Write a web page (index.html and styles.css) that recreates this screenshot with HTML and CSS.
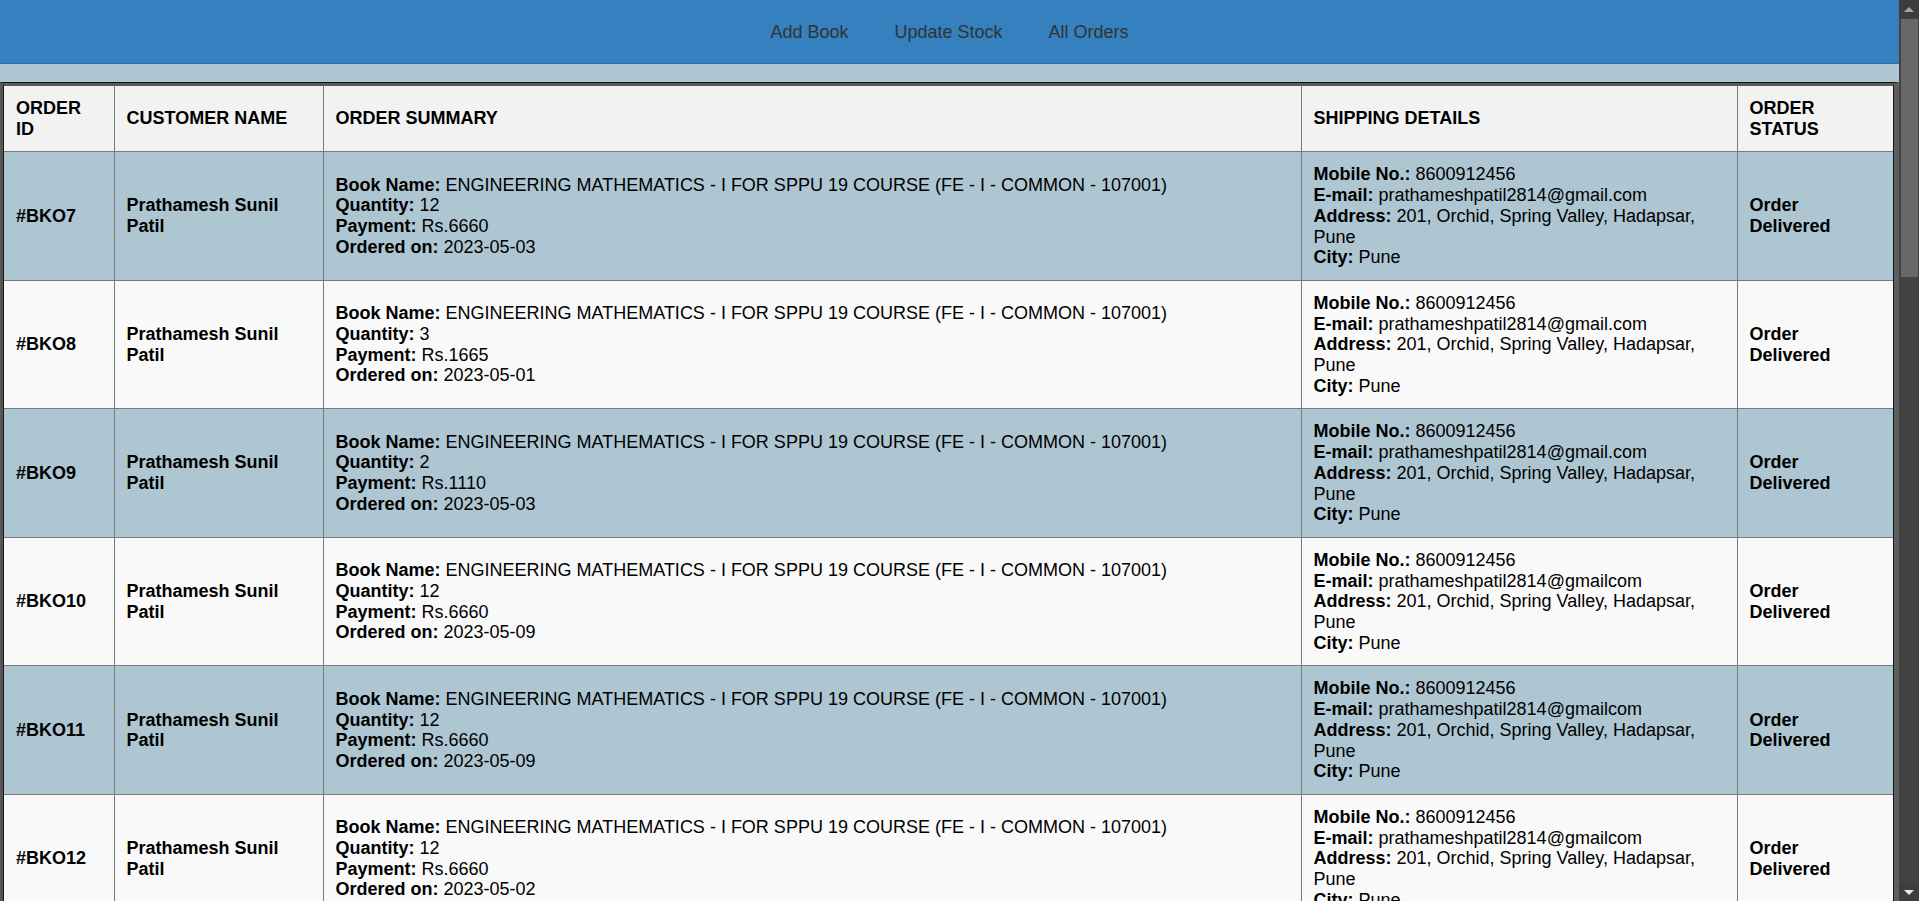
FILE: index.html
```html
<!DOCTYPE html>
<html lang="en">
<head>
<meta charset="utf-8">
<title>All Orders</title>
<link rel="stylesheet" href="styles.css">
</head>
<body>
<div class="page">
<nav class="topnav">
  <a class="nav-link" href="#">Add Book</a>
  <a class="nav-link" href="#">Update Stock</a>
  <a class="nav-link" href="#">All Orders</a>
</nav>
<main class="orders">
  <div class="orders-inner">
    <table class="orders-table">
      <colgroup>
        <col class="c-id">
        <col class="c-name">
        <col class="c-summary">
        <col class="c-ship">
        <col class="c-status">
      </colgroup>
      <thead>
        <tr><th>ORDER ID</th><th>CUSTOMER NAME</th><th>ORDER SUMMARY</th><th>SHIPPING DETAILS</th><th>ORDER STATUS</th></tr>
      </thead>
      <tbody>
        <tr><td class="bold">#BKO7</td><td class="bold">Prathamesh Sunil Patil</td><td><b>Book Name:</b> ENGINEERING MATHEMATICS - I FOR SPPU 19 COURSE (FE - I - COMMON - 107001)<br><b>Quantity:</b> 12<br><b>Payment:</b> Rs.6660<br><b>Ordered on:</b> 2023-05-03</td><td><b>Mobile No.:</b> 8600912456<br><b>E-mail:</b> prathameshpatil2814@gmail.com<br><b>Address:</b> 201, Orchid, Spring Valley, Hadapsar, Pune<br><b>City:</b> Pune</td><td class="bold">Order Delivered</td></tr>
        <tr><td class="bold">#BKO8</td><td class="bold">Prathamesh Sunil Patil</td><td><b>Book Name:</b> ENGINEERING MATHEMATICS - I FOR SPPU 19 COURSE (FE - I - COMMON - 107001)<br><b>Quantity:</b> 3<br><b>Payment:</b> Rs.1665<br><b>Ordered on:</b> 2023-05-01</td><td><b>Mobile No.:</b> 8600912456<br><b>E-mail:</b> prathameshpatil2814@gmail.com<br><b>Address:</b> 201, Orchid, Spring Valley, Hadapsar, Pune<br><b>City:</b> Pune</td><td class="bold">Order Delivered</td></tr>
        <tr><td class="bold">#BKO9</td><td class="bold">Prathamesh Sunil Patil</td><td><b>Book Name:</b> ENGINEERING MATHEMATICS - I FOR SPPU 19 COURSE (FE - I - COMMON - 107001)<br><b>Quantity:</b> 2<br><b>Payment:</b> Rs.1110<br><b>Ordered on:</b> 2023-05-03</td><td><b>Mobile No.:</b> 8600912456<br><b>E-mail:</b> prathameshpatil2814@gmail.com<br><b>Address:</b> 201, Orchid, Spring Valley, Hadapsar, Pune<br><b>City:</b> Pune</td><td class="bold">Order Delivered</td></tr>
        <tr><td class="bold">#BKO10</td><td class="bold">Prathamesh Sunil Patil</td><td><b>Book Name:</b> ENGINEERING MATHEMATICS - I FOR SPPU 19 COURSE (FE - I - COMMON - 107001)<br><b>Quantity:</b> 12<br><b>Payment:</b> Rs.6660<br><b>Ordered on:</b> 2023-05-09</td><td><b>Mobile No.:</b> 8600912456<br><b>E-mail:</b> prathameshpatil2814@gmailcom<br><b>Address:</b> 201, Orchid, Spring Valley, Hadapsar, Pune<br><b>City:</b> Pune</td><td class="bold">Order Delivered</td></tr>
        <tr><td class="bold">#BKO11</td><td class="bold">Prathamesh Sunil Patil</td><td><b>Book Name:</b> ENGINEERING MATHEMATICS - I FOR SPPU 19 COURSE (FE - I - COMMON - 107001)<br><b>Quantity:</b> 12<br><b>Payment:</b> Rs.6660<br><b>Ordered on:</b> 2023-05-09</td><td><b>Mobile No.:</b> 8600912456<br><b>E-mail:</b> prathameshpatil2814@gmailcom<br><b>Address:</b> 201, Orchid, Spring Valley, Hadapsar, Pune<br><b>City:</b> Pune</td><td class="bold">Order Delivered</td></tr>
        <tr><td class="bold">#BKO12</td><td class="bold">Prathamesh Sunil Patil</td><td><b>Book Name:</b> ENGINEERING MATHEMATICS - I FOR SPPU 19 COURSE (FE - I - COMMON - 107001)<br><b>Quantity:</b> 12<br><b>Payment:</b> Rs.6660<br><b>Ordered on:</b> 2023-05-02</td><td><b>Mobile No.:</b> 8600912456<br><b>E-mail:</b> prathameshpatil2814@gmailcom<br><b>Address:</b> 201, Orchid, Spring Valley, Hadapsar, Pune<br><b>City:</b> Pune</td><td class="bold">Order Delivered</td></tr>
        <tr><td class="bold">#BKO13</td><td class="bold">Prathamesh Sunil Patil</td><td><b>Book Name:</b> ENGINEERING MATHEMATICS - I FOR SPPU 19 COURSE (FE - I - COMMON - 107001)<br><b>Quantity:</b> 1<br><b>Payment:</b> Rs.555<br><b>Ordered on:</b> 2023-05-10</td><td><b>Mobile No.:</b> 8600912456<br><b>E-mail:</b> prathameshpatil2814@gmailcom<br><b>Address:</b> 201, Orchid, Spring Valley, Hadapsar, Pune<br><b>City:</b> Pune</td><td class="bold">Order Delivered</td></tr>
        <tr><td class="bold">#BKO14</td><td class="bold">Prathamesh Sunil Patil</td><td><b>Book Name:</b> ENGINEERING MATHEMATICS - I FOR SPPU 19 COURSE (FE - I - COMMON - 107001)<br><b>Quantity:</b> 2<br><b>Payment:</b> Rs.1110<br><b>Ordered on:</b> 2023-05-11</td><td><b>Mobile No.:</b> 8600912456<br><b>E-mail:</b> prathameshpatil2814@gmailcom<br><b>Address:</b> 201, Orchid, Spring Valley, Hadapsar, Pune<br><b>City:</b> Pune</td><td class="bold">Order Delivered</td></tr>
        <tr><td class="bold">#BKO15</td><td class="bold">Prathamesh Sunil Patil</td><td><b>Book Name:</b> ENGINEERING MATHEMATICS - I FOR SPPU 19 COURSE (FE - I - COMMON - 107001)<br><b>Quantity:</b> 4<br><b>Payment:</b> Rs.2220<br><b>Ordered on:</b> 2023-05-12</td><td><b>Mobile No.:</b> 8600912456<br><b>E-mail:</b> prathameshpatil2814@gmailcom<br><b>Address:</b> 201, Orchid, Spring Valley, Hadapsar, Pune<br><b>City:</b> Pune</td><td class="bold">Order Delivered</td></tr>
        <tr><td class="bold">#BKO16</td><td class="bold">Prathamesh Sunil Patil</td><td><b>Book Name:</b> ENGINEERING MATHEMATICS - I FOR SPPU 19 COURSE (FE - I - COMMON - 107001)<br><b>Quantity:</b> 12<br><b>Payment:</b> Rs.6660<br><b>Ordered on:</b> 2023-05-12</td><td><b>Mobile No.:</b> 8600912456<br><b>E-mail:</b> prathameshpatil2814@gmailcom<br><b>Address:</b> 201, Orchid, Spring Valley, Hadapsar, Pune<br><b>City:</b> Pune</td><td class="bold">Order Delivered</td></tr>
        <tr><td class="bold">#BKO17</td><td class="bold">Prathamesh Sunil Patil</td><td><b>Book Name:</b> ENGINEERING MATHEMATICS - I FOR SPPU 19 COURSE (FE - I - COMMON - 107001)<br><b>Quantity:</b> 3<br><b>Payment:</b> Rs.1665<br><b>Ordered on:</b> 2023-05-13</td><td><b>Mobile No.:</b> 8600912456<br><b>E-mail:</b> prathameshpatil2814@gmailcom<br><b>Address:</b> 201, Orchid, Spring Valley, Hadapsar, Pune<br><b>City:</b> Pune</td><td class="bold">Order Delivered</td></tr>
        <tr><td class="bold">#BKO18</td><td class="bold">Prathamesh Sunil Patil</td><td><b>Book Name:</b> ENGINEERING MATHEMATICS - I FOR SPPU 19 COURSE (FE - I - COMMON - 107001)<br><b>Quantity:</b> 5<br><b>Payment:</b> Rs.2775<br><b>Ordered on:</b> 2023-05-14</td><td><b>Mobile No.:</b> 8600912456<br><b>E-mail:</b> prathameshpatil2814@gmailcom<br><b>Address:</b> 201, Orchid, Spring Valley, Hadapsar, Pune<br><b>City:</b> Pune</td><td class="bold">Order Delivered</td></tr>
        <tr><td class="bold">#BKO19</td><td class="bold">Prathamesh Sunil Patil</td><td><b>Book Name:</b> ENGINEERING MATHEMATICS - I FOR SPPU 19 COURSE (FE - I - COMMON - 107001)<br><b>Quantity:</b> 12<br><b>Payment:</b> Rs.6660<br><b>Ordered on:</b> 2023-05-15</td><td><b>Mobile No.:</b> 8600912456<br><b>E-mail:</b> prathameshpatil2814@gmailcom<br><b>Address:</b> 201, Orchid, Spring Valley, Hadapsar, Pune<br><b>City:</b> Pune</td><td class="bold">Order Delivered</td></tr>
        <tr><td class="bold">#BKO20</td><td class="bold">Prathamesh Sunil Patil</td><td><b>Book Name:</b> ENGINEERING MATHEMATICS - I FOR SPPU 19 COURSE (FE - I - COMMON - 107001)<br><b>Quantity:</b> 2<br><b>Payment:</b> Rs.1110<br><b>Ordered on:</b> 2023-05-16</td><td><b>Mobile No.:</b> 8600912456<br><b>E-mail:</b> prathameshpatil2814@gmailcom<br><b>Address:</b> 201, Orchid, Spring Valley, Hadapsar, Pune<br><b>City:</b> Pune</td><td class="bold">Order Delivered</td></tr>
        <tr><td class="bold">#BKO21</td><td class="bold">Prathamesh Sunil Patil</td><td><b>Book Name:</b> ENGINEERING MATHEMATICS - I FOR SPPU 19 COURSE (FE - I - COMMON - 107001)<br><b>Quantity:</b> 12<br><b>Payment:</b> Rs.6660<br><b>Ordered on:</b> 2023-05-17</td><td><b>Mobile No.:</b> 8600912456<br><b>E-mail:</b> prathameshpatil2814@gmailcom<br><b>Address:</b> 201, Orchid, Spring Valley, Hadapsar, Pune<br><b>City:</b> Pune</td><td class="bold">Order Delivered</td></tr>
        <tr><td class="bold">#BKO22</td><td class="bold">Prathamesh Sunil Patil</td><td><b>Book Name:</b> ENGINEERING MATHEMATICS - I FOR SPPU 19 COURSE (FE - I - COMMON - 107001)<br><b>Quantity:</b> 6<br><b>Payment:</b> Rs.3330<br><b>Ordered on:</b> 2023-05-18</td><td><b>Mobile No.:</b> 8600912456<br><b>E-mail:</b> prathameshpatil2814@gmailcom<br><b>Address:</b> 201, Orchid, Spring Valley, Hadapsar, Pune<br><b>City:</b> Pune</td><td class="bold">Order Delivered</td></tr>
        <tr><td class="bold">#BKO23</td><td class="bold">Prathamesh Sunil Patil</td><td><b>Book Name:</b> ENGINEERING MATHEMATICS - I FOR SPPU 19 COURSE (FE - I - COMMON - 107001)<br><b>Quantity:</b> 12<br><b>Payment:</b> Rs.6660<br><b>Ordered on:</b> 2023-05-19</td><td><b>Mobile No.:</b> 8600912456<br><b>E-mail:</b> prathameshpatil2814@gmailcom<br><b>Address:</b> 201, Orchid, Spring Valley, Hadapsar, Pune<br><b>City:</b> Pune</td><td class="bold">Order Delivered</td></tr>
        <tr><td class="bold">#BKO24</td><td class="bold">Prathamesh Sunil Patil</td><td><b>Book Name:</b> ENGINEERING MATHEMATICS - I FOR SPPU 19 COURSE (FE - I - COMMON - 107001)<br><b>Quantity:</b> 1<br><b>Payment:</b> Rs.555<br><b>Ordered on:</b> 2023-05-20</td><td><b>Mobile No.:</b> 8600912456<br><b>E-mail:</b> prathameshpatil2814@gmailcom<br><b>Address:</b> 201, Orchid, Spring Valley, Hadapsar, Pune<br><b>City:</b> Pune</td><td class="bold">Order Delivered</td></tr>
      </tbody>
    </table>
  </div>
</main>
</div>
<div class="scrollbar" aria-hidden="true">
  <div class="sb-btn sb-up"><span class="tri-up"></span></div>
  <div class="sb-track">
    <div class="sb-thumb"></div>
  </div>
  <div class="sb-btn sb-down"><span class="tri-down"></span></div>
</div>
</body>
</html>
```

FILE: styles.css
```css
body {
  margin: 0;
  background: #adc6d2;
  color: #000;
  font-family: "Liberation Sans", Arial, sans-serif;
  font-size: 18px;
  line-height: 20.7px;
}

.page {
  margin-right: 20px;
}

.topnav {
  height: 63px;
  background: #3580be;
  border-bottom: 1px solid #2c6da6;
  display: flex;
  justify-content: center;
  align-items: center;
}

.nav-link {
  color: #333;
  text-decoration: none;
  padding: 0 23px;
  line-height: 20px;
}

.orders {
  margin-top: 18px;
  border-top: 1px solid #111;
  border-left: 3px solid #575757;
  border-right: 5px solid #5e5e5e;
}

.orders-inner {
  border-top: 3px solid #5a5a5a;
  border-left: 1px solid #151515;
  border-right: 1px solid #151515;
}

.orders-table {
  width: 100%;
  table-layout: fixed;
  border-collapse: collapse;
  border-style: hidden;
}

.c-id { width: 110px; }
.c-name { width: 209px; }
.c-summary { width: 978px; }
.c-ship { width: 436px; }

.orders-table th,
.orders-table td {
  border: 1px solid #7a7a7a;
  padding: 12px;
  text-align: left;
  vertical-align: middle;
  color: #000;
}

.orders-table th {
  background: #f2f2f2;
  font-weight: bold;
}

.orders-table tbody tr:nth-child(odd) {
  background: #adc6d2;
}

.orders-table tbody tr:nth-child(even) {
  background: #f9f9f9;
}

.bold {
  font-weight: bold;
}

/* window scrollbar drawn over the right edge */
.scrollbar {
  position: fixed;
  top: 0;
  right: 0;
  width: 20px;
  height: 100vh;
  background: #424242;
  display: flex;
  flex-direction: column;
}

.sb-btn {
  height: 18px;
  display: flex;
  align-items: center;
  justify-content: center;
  background: #3d3d3d;
}

.sb-track {
  flex: 1;
  padding: 1px 1px 0 2px;
}

.sb-thumb {
  height: 258px;
  background: #686868;
}

.tri-up {
  width: 0;
  height: 0;
  border-left: 5px solid transparent;
  border-right: 5px solid transparent;
  border-bottom: 5px solid #a3a3a3;
}

.tri-down {
  width: 0;
  height: 0;
  border-left: 5px solid transparent;
  border-right: 5px solid transparent;
  border-top: 5px solid #e8e8e8;
}
```
